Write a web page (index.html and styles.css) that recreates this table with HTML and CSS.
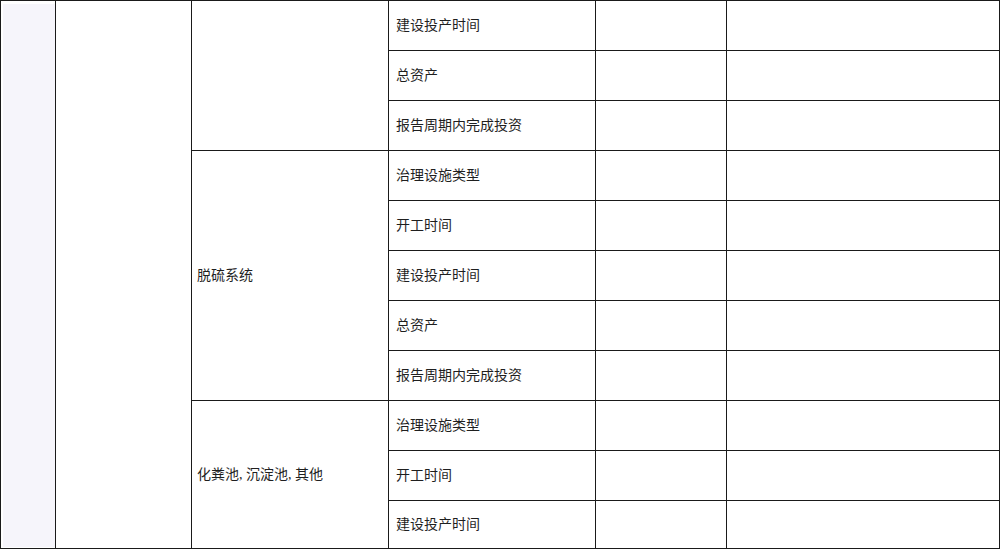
FILE: index.html
```html
<!DOCTYPE html>
<html lang="zh-CN">
<head>
<meta charset="utf-8">
<title>治理设施</title>
<link rel="stylesheet" href="styles.css">
</head>
<body>
<table class="grid">
  <colgroup>
    <col class="c-side">
    <col class="c-cat">
    <col class="c-sys">
    <col class="c-item">
    <col class="c-val">
    <col class="c-note">
  </colgroup>
  <tbody>
    <tr>
      <td class="side" rowspan="11"></td>
      <td class="cat" rowspan="11"></td>
      <td class="sys" rowspan="3"></td>
      <td class="item">建设投产时间</td>
      <td></td>
      <td></td>
    </tr>
    <tr>
      <td class="item">总资产</td>
      <td></td>
      <td></td>
    </tr>
    <tr>
      <td class="item">报告周期内完成投资</td>
      <td></td>
      <td></td>
    </tr>
    <tr>
      <td class="sys" rowspan="5">脱硫系统</td>
      <td class="item">治理设施类型</td>
      <td></td>
      <td></td>
    </tr>
    <tr>
      <td class="item">开工时间</td>
      <td></td>
      <td></td>
    </tr>
    <tr>
      <td class="item">建设投产时间</td>
      <td></td>
      <td></td>
    </tr>
    <tr>
      <td class="item">总资产</td>
      <td></td>
      <td></td>
    </tr>
    <tr>
      <td class="item">报告周期内完成投资</td>
      <td></td>
      <td></td>
    </tr>
    <tr>
      <td class="sys" rowspan="3">化粪池, 沉淀池, 其他</td>
      <td class="item">治理设施类型</td>
      <td></td>
      <td></td>
    </tr>
    <tr>
      <td class="item">开工时间</td>
      <td></td>
      <td></td>
    </tr>
    <tr class="last">
      <td class="item">建设投产时间</td>
      <td></td>
      <td></td>
    </tr>
  </tbody>
</table>
</body>
</html>
```

FILE: styles.css
```css
html, body {
  margin: 0;
  padding: 0;
  background: #ffffff;
}

body {
  font-family: "Liberation Serif", "Noto Sans CJK SC", serif;
  font-size: 14px;
  color: #1f1f1f;
  overflow: hidden;
}

.grid {
  width: 999px;
  table-layout: fixed;
  border-collapse: collapse;
}

.c-side { width: 55px; }
.c-cat  { width: 136px; }
.c-sys  { width: 197px; }
.c-item { width: 207px; }
.c-val  { width: 131px; }
.c-note { width: 273px; }

.grid tr {
  height: 50px;
}

.grid tr.last {
  height: 48px;
}

.grid td {
  border: 1px solid #1a1a1a;
  padding: 0 7px;
  vertical-align: middle;
  white-space: nowrap;
  line-height: 20px;
}

.grid td.side {
  background: #f6f5fb;
  box-shadow: inset 2px 3px 0 #ffffff, inset 0 -1px 0 #ffffff;
  padding: 0;
}

.grid td.sys {
  padding-left: 5px;
}
```
